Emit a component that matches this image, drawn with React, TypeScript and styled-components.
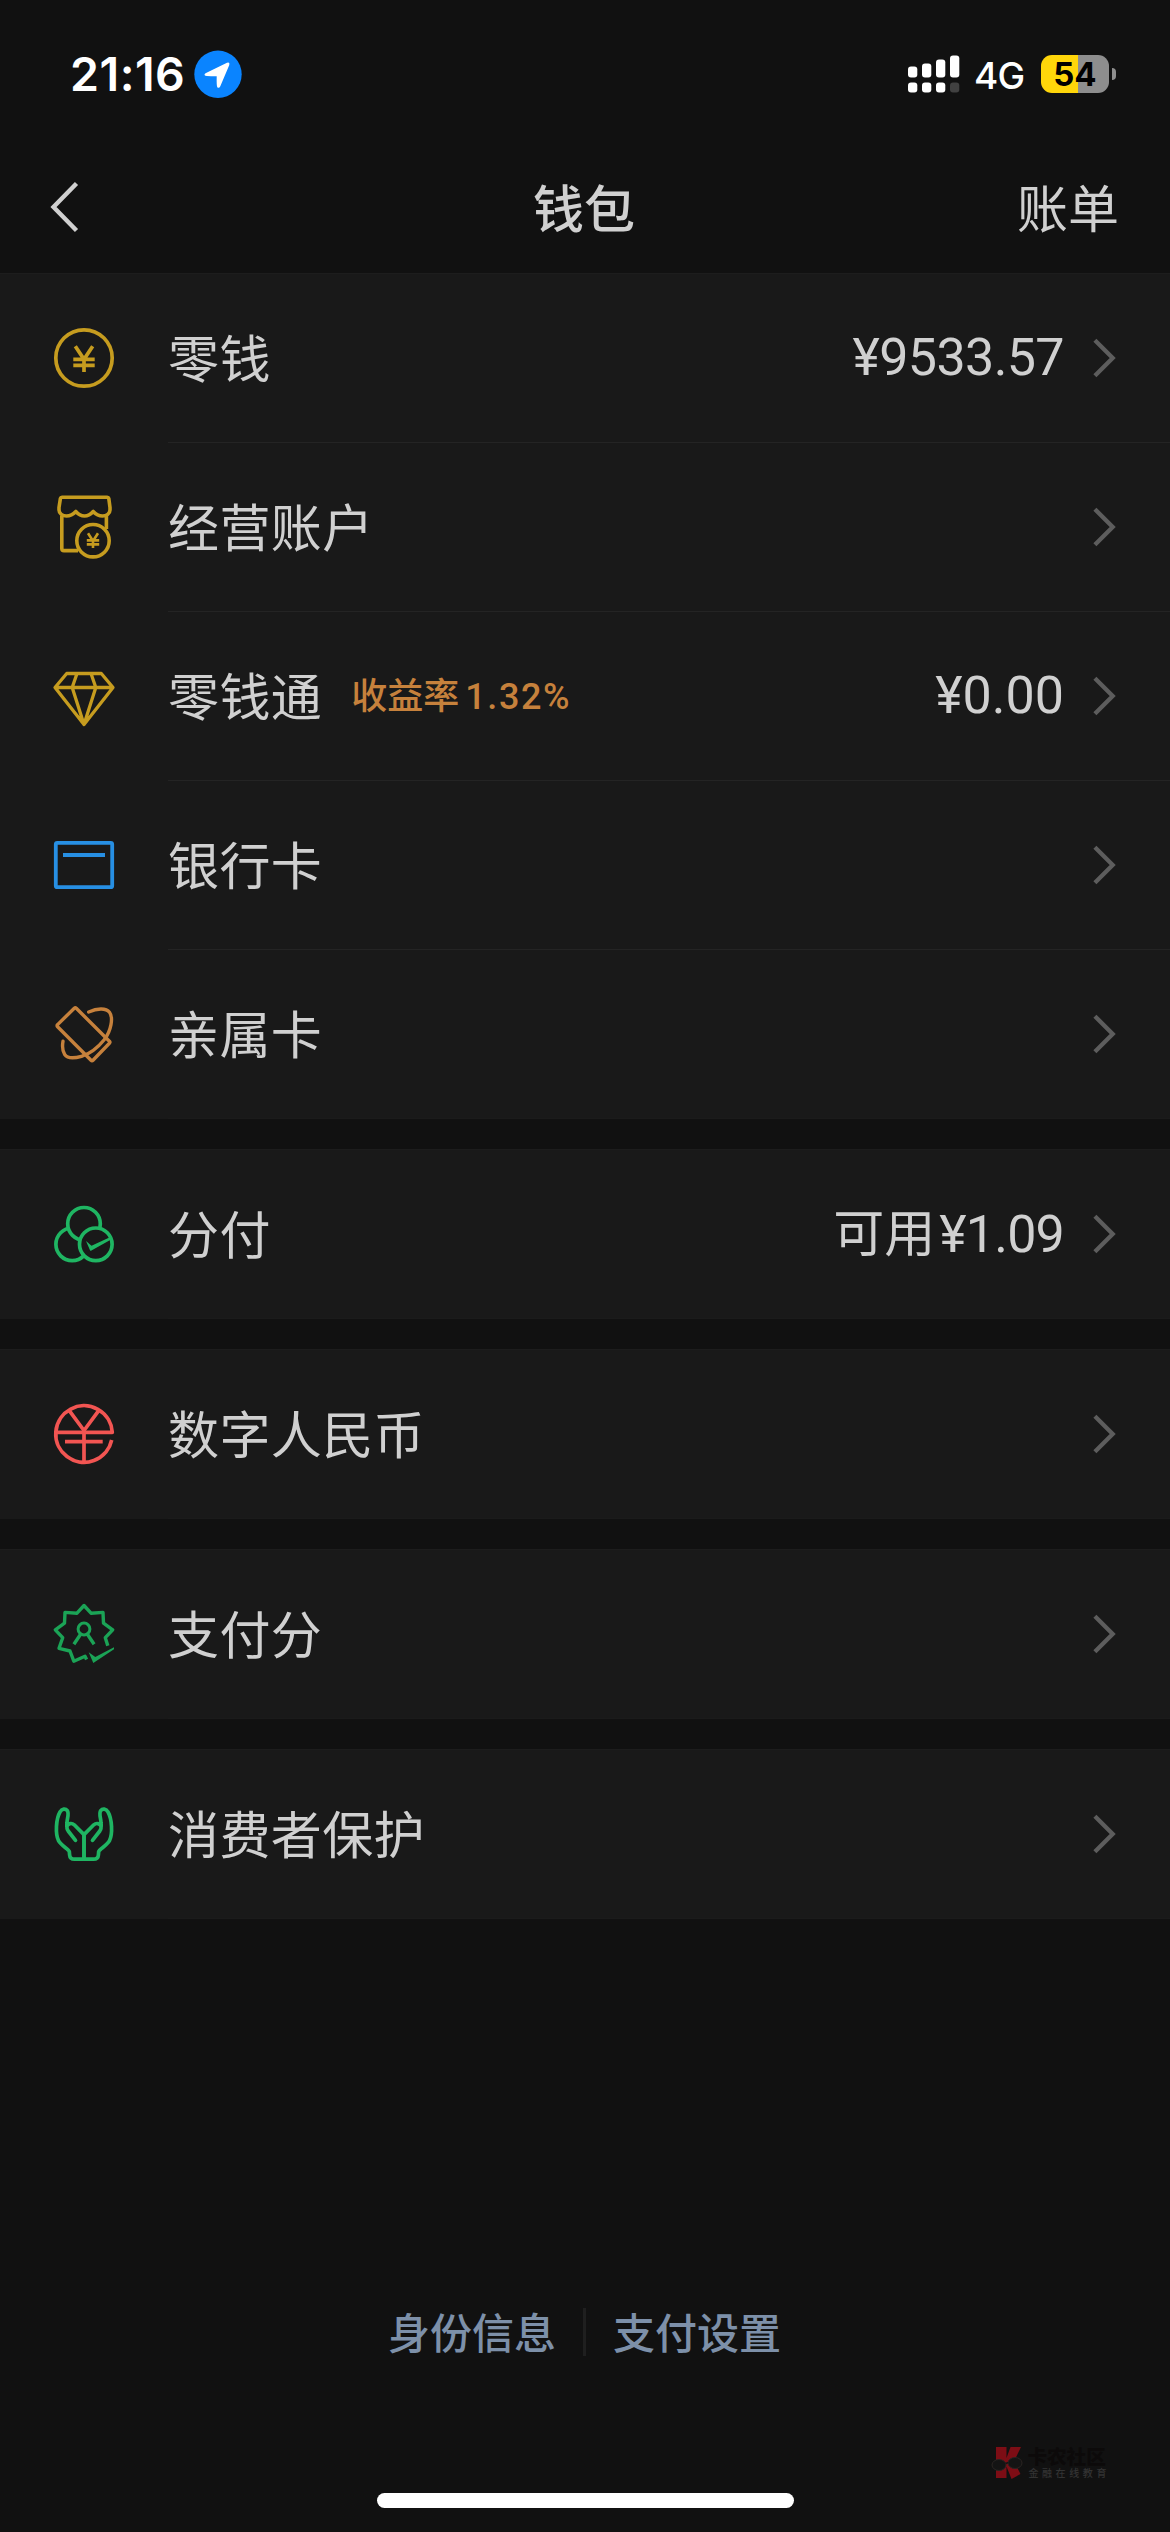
import React from "react";
import styled, { createGlobalStyle } from "styled-components";

const cjk = `"Noto Sans CJK SC", sans-serif`;
const gold = "#c69c1f";
const green = "#1fb562";
const greenDeep = "#1ba356";
const copper = "#c6813c";

const GlobalStyle = createGlobalStyle`
  * { box-sizing: border-box; }
  body { margin: 0; background: #111111; }
`;

const Screen = styled.div`
  width: 1170px;
  height: 2532px;
  display: flex;
  flex-direction: column;
  background: #111111;
  color: #d0d0d0;
  font-family: Roboto, ${cjk};
  overflow: hidden;
`;

const StatusBar = styled.header`
  height: 148px;
  flex: none;
  display: flex;
  align-items: center;
  padding: 0 54px 0 70px;
  color: #ffffff;
  font-family: Inter, sans-serif;
`;

const Clock = styled.span`
  width: 124px;
  font-size: 46.5px;
  font-weight: 600;
  line-height: 60px;
  letter-spacing: 0.5px;
  white-space: nowrap;
`;

const StatusRight = styled.div`
  margin-left: auto;
  display: flex;
  align-items: center;
`;

const Network = styled.span`
  margin-left: 14px;
  width: 67px;
  font-size: 37px;
  font-weight: 500;
  line-height: 48px;
  letter-spacing: -0.8px;
  padding-top: 3px;
`;

const Battery = styled.div`
  width: 68px;
  height: 38px;
  border-radius: 11px;
  background: linear-gradient(90deg, #ffd60a 54.5%, #8e8e8e 54.5%);
  color: #000000;
  display: flex;
  align-items: center;
  justify-content: center;
  font-size: 33px;
  font-weight: 700;
  line-height: 38px;
`;

const BatteryCap = styled.div`
  width: 4px;
  height: 12px;
  margin-left: 3px;
  border-radius: 0 6px 6px 0;
  background: #8e8e8e;
`;

const NavBar = styled.nav`
  height: 125px;
  flex: none;
  display: grid;
  grid-template-columns: 1fr auto 1fr;
  align-items: center;
  padding: 0 51px 7px 49px;
`;

const Title = styled.h1`
  margin: 0;
  padding-bottom: 3px;
  font: 500 51px/70px ${cjk};
`;

const NavAction = styled.a`
  justify-self: end;
  padding-bottom: 3px;
  font: 400 51px/70px ${cjk};
`;

const BackIcon = styled.svg`
  margin-left: -1px;
`;

const Groups = styled.main`
  display: flex;
  flex-direction: column;
  gap: 30px;
`;

const Group = styled.section`
  background: #191919;
  border-top: 1px solid #1d1d1d;
`;

const Row = styled.div`
  height: 169px;
  display: flex;
  gap: 48px;
  padding-left: 48px;
`;

const IconSlot = styled.div`
  width: 72px;
  height: 168px;
  display: flex;
  align-items: center;
`;

const RowBody = styled.div<{ $divided: boolean }>`
  flex: 1;
  display: flex;
  align-items: center;
  padding-right: 53px;
  border-bottom: 1px solid ${(p) => (p.$divided ? "#242424" : "#1b1b1b")};
`;

const Label = styled.span`
  padding-bottom: 4px;
  font: 400 51px/74px ${cjk};
  letter-spacing: 0.4px;
`;

const Rate = styled.span`
  margin-left: 29px;
  padding-bottom: 2px;
  display: flex;
  align-items: baseline;
  color: ${copper};
  font: 500 36px/52px ${cjk};
`;

const RateNumber = styled.span`
  margin-left: 6px;
  font: 500 36px/52px Roboto, sans-serif;
  letter-spacing: 1.6px;
`;

const Value = styled.span<{ $tracking: number; $lift: number }>`
  margin-left: auto;
  margin-right: 29px;
  padding-bottom: ${(p) => p.$lift}px;
  display: flex;
  align-items: baseline;
  font: 400 52px/74px Roboto, sans-serif;
  letter-spacing: ${(p) => p.$tracking}px;
`;

const ValuePrefix = styled.span`
  margin-right: 4px;
  font: 400 51px/74px ${cjk};
  letter-spacing: 0;
`;

const Spacer = styled.span`
  flex: 1;
`;

const ChevronSvg = styled.svg`
  flex: none;
`;

const Footer = styled.footer`
  margin-top: auto;
  height: 48px;
  flex: none;
  display: flex;
  justify-content: center;
  align-items: center;
  gap: 27px;
  padding-right: 1px;
`;

const FooterLink = styled.a`
  padding-bottom: 3px;
  color: #7d90a9;
  font: 500 42px/45px ${cjk};
`;

const FooterRule = styled.span`
  width: 3px;
  height: 48px;
  background: #1f1f1f;
`;

const Watermark = styled.div`
  height: 36px;
  flex: none;
  margin: 89px 60px 0 auto;
  display: flex;
  align-items: center;
  gap: 4px;
`;

const WatermarkText = styled.div`
  display: flex;
  flex-direction: column;
  font-family: ${cjk};
  white-space: nowrap;
`;

const WatermarkName = styled.span`
  font-size: 19.6px;
  font-weight: 900;
  line-height: 20px;
  color: #0c0a0a;
`;

const WatermarkTag = styled.span`
  padding-left: 1px;
  font-size: 10px;
  font-weight: 500;
  line-height: 14px;
  letter-spacing: 3.6px;
  color: #333333;
`;

const HomeBar = styled.div`
  width: 417px;
  height: 15px;
  flex: none;
  margin: 12px auto 24px 377px;
  border-radius: 8px;
  background: #ffffff;
`;

const Glyph = ({ color, width = 3.7, children }: { color: string; width?: number; children: React.ReactNode }) => (
  <svg width="72" height="72" viewBox="0 0 72 72" fill="none" stroke={color} strokeWidth={width} strokeLinejoin="round">
    {children}
  </svg>
);

const CoinIcon = () => (
  <Glyph color={gold}>
    <circle cx="36" cy="36" r="28.2" />
    <path d="M27.3 24.2 36 37.3 44.7 24.2M36 37V50M25.3 37.4H46.7M25.3 43.4H46.7" strokeLinejoin="miter" />
  </Glyph>
);

const ShopIcon = () => (
  <Glyph color={gold} width={3.6}>
    <path d="M14 6.2H59.2Q60.5 6.2 60.8 7.4L62 16.5V19C62 22.500 58.500 25 54.500 25C50.500 25 47.500 23 45.200 20.500C43 23 40 25 36.500 25C33 25 30 23 27.800 20.500C25.500 23 22.500 25 18.500 25C14.500 25 11 22.500 11 19V16.500L12.400 7.400Q12.700 6.200 14 6.200Z" />
    <path d="M13.8 25V57.500Q13.800 59.600 16 59.600H30M58.400 25V38" />
    <circle cx="45" cy="49.7" r="16.200" />
    <path d="M40 42.200 45 50 50 42.200M45 49.500V57M38.800 49.400H51.200M38.800 53.400H51.200" strokeWidth="2.6" />
  </Glyph>
);

const DiamondIcon = () => (
  <Glyph color={gold} width={3.3}>
    <path d="M18.7 13.5H53.3L65 27.5 36 64.5 7 27.5ZM7 27.5H65M29 13.5 24.2 27.5 36 64.5 47.8 27.5 43 13.5" />
  </Glyph>
);

const BankCardIcon = () => (
  <Glyph color="#278fe3" width={3.8}>
    <rect x="7.8" y="13.8" width="56.4" height="44.4" rx="1.5" />
    <path d="M15 26H57" />
  </Glyph>
);

const FamilyCardIcon = () => (
  <Glyph color={copper} width={3.4}>
    <path d="M28.3 10.3 61.4 43.2Q62.4 44.3 61.4 45.3L45 62.2Q44 63.2 43 62.2L9.6 28.7Q8.5 27.6 9.6 26.6L26.3 10.3Q27.3 9.4 28.3 10.3Z" />
    <path
      d="M40.7 14C49 10.3 58 9.7 61.5 14.2C65.5 19.5 63.2 33 56.2 41.7C49.5 50 42 55.7 33.5 58.3C26.5 60.3 19.5 60.6 16.7 56.5C14.4 53 14.2 48 15 43.3"
      strokeLinecap="round"
    />
  </Glyph>
);

const FenfuIcon = () => (
  <Glyph color={green}>
    <circle cx="24.2" cy="46.3" r="16.3" />
    <circle cx="36" cy="25.8" r="16.3" fill="#191919" />
    <circle cx="47.8" cy="46.3" r="16.3" fill="#191919" />
    <path d="M38 43 43.5 47.8 63 38.8 64 41 43 52.8Q42.3 53 42 52.2Z" fill={green} stroke="none" />
  </Glyph>
);

const DigitalYuanIcon = () => (
  <Glyph color="#f25552">
    <path d="M7.7 34.3H64.3A28.3 28.3 0 1 0 63.7 42" />
    <path d="M21.3 12.7 36 32.5 50.7 12.7M36 32V64M17 43.7H54.7" strokeLinejoin="miter" />
  </Glyph>
);

const PayScoreIcon = () => (
  <Glyph color={greenDeep} width={3.4}>
    <path d="M59.8 47.8 57.3 39.7 64.7 31.8 55.5 25.2 55 14.4 43 15.2 36 7.5 29 15.2 17 14.4 16.5 25.2 7.3 31.8 14.7 39.7 11 50.3 22 53 25.8 63.2 37 58.3 38.6 61.5" />
    <circle cx="36" cy="31" r="5.9" strokeWidth="3" />
    <path d="M32.6 36.2 25.9 46.2M39.4 36.2 46.1 46.2" />
    <path d="M40.7 54.3 47.3 59 66 49.2V51.3L45.3 65Z" fill={greenDeep} stroke="none" />
  </Glyph>
);

const hand =
  "M36 61.2H26.5C23.5 61.2 21.8 59.7 21.6 56.8L21.3 53.5C20.8 51.5 12.8 47.2 10.5 42.7C7.2 36 7.9 21 12.1 13.8C13.8 10.7 17.5 10.3 19.3 12.6C21.3 15.3 19.2 20.2 19 24.5C18.7 28.5 18.2 30.3 20.2 33L27.5 42.3M18.9 28.2C20.3 25.3 23.7 24.6 26.2 26.8L36 36.6V61.2";

const HandsIcon = () => (
  <Glyph color={green}>
    <path d={hand} strokeLinecap="round" />
    <path d={hand} strokeLinecap="round" transform="matrix(-1 0 0 1 72 0)" />
  </Glyph>
);

const Chevron = () => (
  <ChevronSvg width="24" height="42" viewBox="0 0 24 42" fill="none" stroke="#5d5d5d" strokeWidth="4.300">
    <path d="M1.900 3.200 19.700 21 1.900 38.800" />
  </ChevronSvg>
);

type Item = {
  icon: React.ReactNode;
  label: string;
  rate?: [string, string];
  prefix?: string;
  value?: string;
  tracking?: number;
};

const groups: Item[][] = [
  [
    { icon: <CoinIcon />, label: "零钱", value: "¥9533.57", tracking: -0.6 },
    { icon: <ShopIcon />, label: "经营账户" },
    { icon: <DiamondIcon />, label: "零钱通", rate: ["收益率", "1.32%"], value: "¥0.00" },
    { icon: <BankCardIcon />, label: "银行卡" },
    { icon: <FamilyCardIcon />, label: "亲属卡" },
  ],
  [{ icon: <FenfuIcon />, label: "分付", prefix: "可用", value: "¥1.09", tracking: -0.8 }],
  [{ icon: <DigitalYuanIcon />, label: "数字人民币" }],
  [{ icon: <PayScoreIcon />, label: "支付分" }],
  [{ icon: <HandsIcon />, label: "消费者保护" }],
];

export default function App() {
  return (
    <Screen>
      <GlobalStyle />
      <StatusBar>
        <Clock>21:16</Clock>
        <svg width="48" height="48" viewBox="0 0 48 48">
          <circle cx="24" cy="24.3" r="23.7" fill="#0a84ff" />
          <path
            d="M12 23 33 12.800Q36 11.800 35.300 15L26.300 36.300Q25 38.800 23.300 37.200Q22.500 36.300 22.700 26.200Q14 26.300 11.500 25.800Q9.300 24.500 12 23Z"
            fill="#ffffff"
          />
        </svg>
        <StatusRight>
          <svg width="52" height="38" viewBox="0 0 52 38" fill="#ffffff">
            <rect x="0" y="11.500" width="9.300" height="11" rx="3" />
            <rect x="14" y="8.500" width="9.300" height="14" rx="3" />
            <rect x="28" y="4.500" width="9.300" height="18" rx="3" />
            <rect x="42" y="0.500" width="9.300" height="22" rx="3" />
            <rect x="0" y="27.500" width="9.300" height="10" rx="3" />
            <rect x="14" y="27.500" width="9.300" height="10" rx="3" />
            <rect x="28" y="27.500" width="9.300" height="10" rx="3" />
            <rect x="42" y="27.500" width="9.300" height="10" rx="3" fill="#414141" />
          </svg>
          <Network>4G</Network>
          <Battery>54</Battery>
          <BatteryCap />
        </StatusRight>
      </StatusBar>
      <NavBar>
        <BackIcon width="34" height="54" viewBox="0 0 34 54" fill="none" stroke="#d0d0d0" strokeWidth="4.4">
          <path d="M28.500 3.500 5.500 27 28.500 50.500" />
        </BackIcon>
        <Title>钱包</Title>
        <NavAction>账单</NavAction>
      </NavBar>
      <Groups>
        {groups.map((items, g) => (
          <Group key={g}>
            {items.map((item, i) => (
              <Row key={item.label}>
                <IconSlot>{item.icon}</IconSlot>
                <RowBody $divided={i < items.length - 1}>
                  <Label>{item.label}</Label>
                  {item.rate && (
                    <Rate>
                      {item.rate[0]}
                      <RateNumber>{item.rate[1]}</RateNumber>
                    </Rate>
                  )}
                  {item.value ? (
                    <Value $tracking={item.tracking ?? 0} $lift={item.prefix ? 4 : 0}>
                      {item.prefix && <ValuePrefix>{item.prefix}</ValuePrefix>}
                      {item.value}
                    </Value>
                  ) : (
                    <Spacer />
                  )}
                  <Chevron />
                </RowBody>
              </Row>
            ))}
          </Group>
        ))}
      </Groups>
      <Footer>
        <FooterLink>身份信息</FooterLink>
        <FooterRule />
        <FooterLink>支付设置</FooterLink>
      </Footer>
      <Watermark>
        <svg width="32" height="36" viewBox="0 0 32 36">
          <path d="M5 2H15.500V13L19.500 2H30L23 16.500 29.500 29 20.500 34 15.500 21.500V33H5Z" fill="#7d0d15" />
          <ellipse cx="8" cy="20" rx="7" ry="5.500" fill="#141414" stroke="#2a2422" strokeWidth="1" />
          <ellipse cx="24" cy="18" rx="7" ry="5.500" fill="#141414" stroke="#2a2422" strokeWidth="1" />
          <path d="M14.500 18.500 17.500 17.500" stroke="#141414" strokeWidth="1.500" />
        </svg>
        <WatermarkText>
          <WatermarkName>卡农社区</WatermarkName>
          <WatermarkTag>金融在线教育</WatermarkTag>
        </WatermarkText>
      </Watermark>
      <HomeBar />
    </Screen>
  );
}
